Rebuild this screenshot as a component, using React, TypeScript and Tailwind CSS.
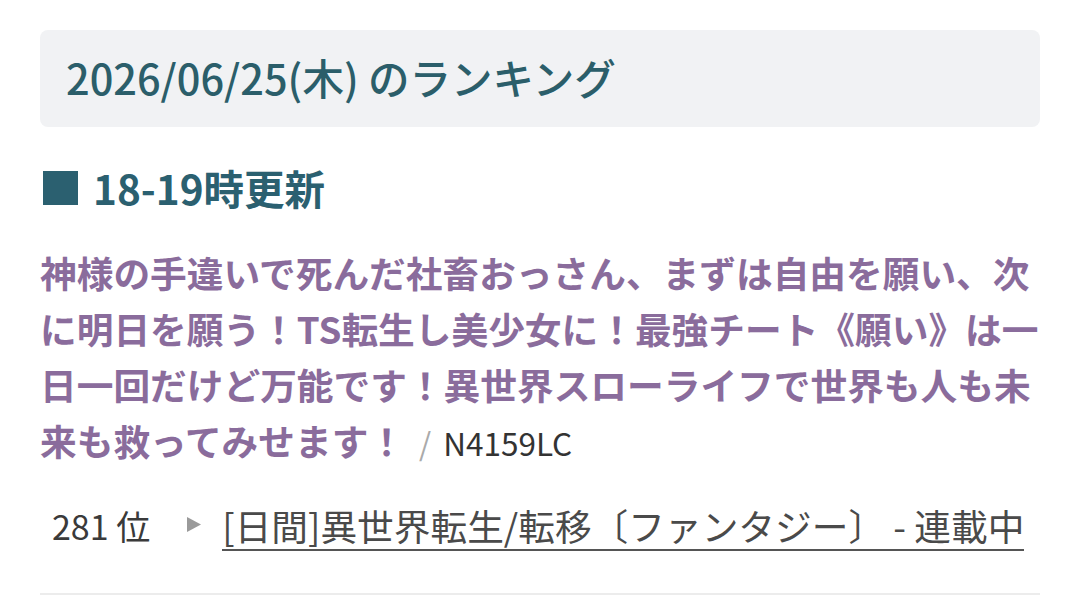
import React from "react";

const font = { fontFamily: '"Noto Sans CJK JP", "Noto Sans", sans-serif' };

export default function App() {
  return (
    <div className="w-[1080px] h-[605px] bg-white overflow-hidden" style={font}>
      <div className="px-[40px] pt-[30px]">
        <div className="h-[97px] rounded-[8px] bg-[#f1f2f4] flex items-center px-[26px]">
          <h1 className="text-[41.5px] leading-none font-medium text-[#2b5e6a] -mt-[2px]">
            2026/06/25(木) のランキング
          </h1>
        </div>

        <h2 className="mt-[37px] text-[40.5px] leading-[48px] font-bold text-[#2b6070] flex items-center">
          <span className="inline-block w-[35px] h-[34px] bg-[#2b6070] ml-[3px] mr-[15px]" />
          18-19時更新
        </h2>

        <p className="mt-[32px] w-[1020px] text-[36.7px] leading-[56px] font-bold text-[#8a6c9c]">
          神様の手違いで死んだ社畜おっさん、まずは自由を願い、次に明日を願う！TS転生し美少女に！最強チート《願い》は一日一回だけど万能です！異世界スローライフで世界も人も未来も救ってみせます！
          <span className="font-normal text-[31px] text-[#aaa] ml-[14px] mr-[12px]">/</span>
          <span className="font-normal text-[31.5px] text-[#333]">N4159LC</span>
        </p>

        <div className="mt-[31px] flex items-center h-[48px] pl-[12px]">
          <span className="text-[34px] leading-[48px] text-[#3a3a3a]">281 位</span>
          <svg className="ml-[36px] mr-[20px] -mt-[4px] shrink-0" width="16" height="17" viewBox="0 0 16 17">
            <path d="M1 1 L15 8.5 L1 16 Z" fill="#9a9a9a" />
          </svg>
          <a className="text-[36.7px] leading-[48px] text-[#4a4a4a] border-b-2 border-[#555]">
            [日間]異世界転生/転移〔ファンタジー〕 - 連載中
          </a>
        </div>

        <div className="mt-[43px] border-t-2 border-[#ececec]" />
      </div>
    </div>
  );
}
